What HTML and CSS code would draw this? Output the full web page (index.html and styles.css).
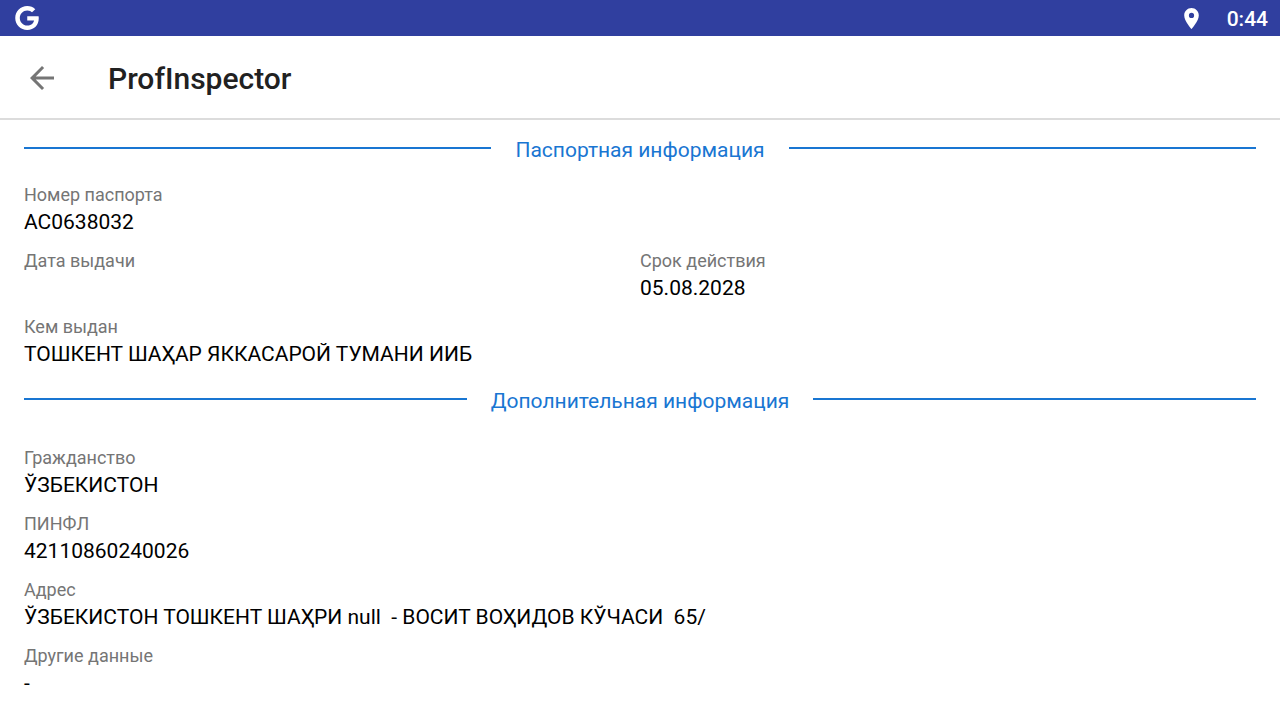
FILE: index.html
```html
<!DOCTYPE html>
<html lang="ru">
<head>
<meta charset="utf-8">
<meta name="viewport" content="width=device-width, initial-scale=1">
<title>ProfInspector</title>
<link rel="stylesheet" href="styles.css">
</head>
<body>
<div class="status-bar">
  <svg class="status-logo" viewBox="0 0 24 24" aria-hidden="true"><path fill="currentColor" d="M12.240 10.285V14.400h6.806c-.275 1.765-2.056 5.174-6.806 5.174-4.095 0-7.439-3.389-7.439-7.574s3.345-7.574 7.439-7.574c2.330 0 3.891.989 4.785 1.849l3.254-3.138C18.189 1.186 15.479 0 12.240 0c-6.635 0-12 5.365-12 12s5.365 12 12 12c6.926 0 11.520-4.869 11.520-11.726 0-.788-.085-1.390-.189-1.989H12.240z"/></svg>
  <div class="status-right">
    <svg class="status-pin" viewBox="0 0 24 24" aria-hidden="true"><path fill="currentColor" d="M12 2C8.130 2 5 5.130 5 9c0 5.250 7 13 7 13s7-7.750 7-13c0-3.870-3.130-7-7-7zm0 9.500a2.500 2.500 0 0 1 0-5 2.500 2.500 0 0 1 0 5z"/></svg>
    <time class="clock">0:44</time>
  </div>
</div>
<header class="toolbar">
  <button class="back" type="button" aria-label="Назад"><svg class="back-icon" viewBox="0 0 24 24" aria-hidden="true"><path fill="currentColor" d="M20 11H7.830l5.590-5.590L12 4l-8 8 8 8 1.410-1.410L7.830 13H20v-2z"/></svg></button>
  <h1 class="title">ProfInspector</h1>
</header>
<main class="content">
  <section>
    <h2 class="section-title">Паспортная информация</h2>
    <dl class="fields passport">
      <div class="field wide"><dt>Номер паспорта</dt><dd>AC0638032</dd></div>
      <div class="field"><dt>Дата выдачи</dt><dd></dd></div>
      <div class="field"><dt>Срок действия</dt><dd>05.08.2028</dd></div>
      <div class="field wide"><dt>Кем выдан</dt><dd>ТОШКЕНТ ШАҲАР ЯККАСАРОЙ ТУМАНИ ИИБ</dd></div>
    </dl>
  </section>
  <section>
    <h2 class="section-title">Дополнительная информация</h2>
    <dl class="fields extra">
      <div class="field wide"><dt>Гражданство</dt><dd>ЎЗБЕКИСТОН</dd></div>
      <div class="field wide"><dt>ПИНФЛ</dt><dd>42110860240026</dd></div>
      <div class="field wide"><dt>Адрес</dt><dd>ЎЗБЕКИСТОН ТОШКЕНТ ШАҲРИ null  - ВОСИТ ВОҲИДОВ КЎЧАСИ  65/</dd></div>
      <div class="field wide"><dt>Другие данные</dt><dd>-</dd></div>
    </dl>
  </section>
</main>
</body>
</html>
```

FILE: styles.css
```css
* { box-sizing: border-box; }
body { margin: 0; background: #fff; color: #000; font-family: Roboto, "Noto Sans", sans-serif; }
.status-bar { display: flex; justify-content: space-between; align-items: center; height: 36px; padding: 0 12px 0 15px; background: #303f9f; color: #fff; }
.status-logo { width: 24px; height: 24px; }
.status-right { display: flex; align-items: center; gap: 23px; }
.status-pin { width: 25px; height: 25px; }
.clock { padding-top: 2px; font-size: 21px; line-height: 34px; font-weight: 500; }
.toolbar { display: flex; align-items: center; gap: 48px; height: 84px; padding: 2px 24px 0; border-bottom: 2px solid #dcdcdc; }
.back { display: flex; padding: 0; border: 0; background: none; color: #757575; cursor: pointer; }
.back-icon { width: 36px; height: 36px; }
.title { margin: 0; padding-top: 2px; font-size: 30px; line-height: 36px; font-weight: 500; color: #212121; }
.content { padding: 16px 24px; }
.section-title { display: flex; align-items: center; gap: 24px; margin: 0; font-size: 21px; line-height: 28px; font-weight: 400; color: #1976d2; }
.section-title::before, .section-title::after { content: ""; flex: 1; height: 2px; margin-bottom: 4px; background: currentColor; }
.fields { display: grid; grid-template-columns: 1fr 1fr; row-gap: 12px; margin: 0; }
.passport { padding: 18px 0 19px; }
.extra { padding-top: 30px; }
.wide { grid-column: 1 / -1; }
dt { font-size: 18px; line-height: 26px; color: #757575; }
dd { margin: 0; min-height: 28px; font-size: 21px; line-height: 28px; white-space: pre-wrap; }
```
